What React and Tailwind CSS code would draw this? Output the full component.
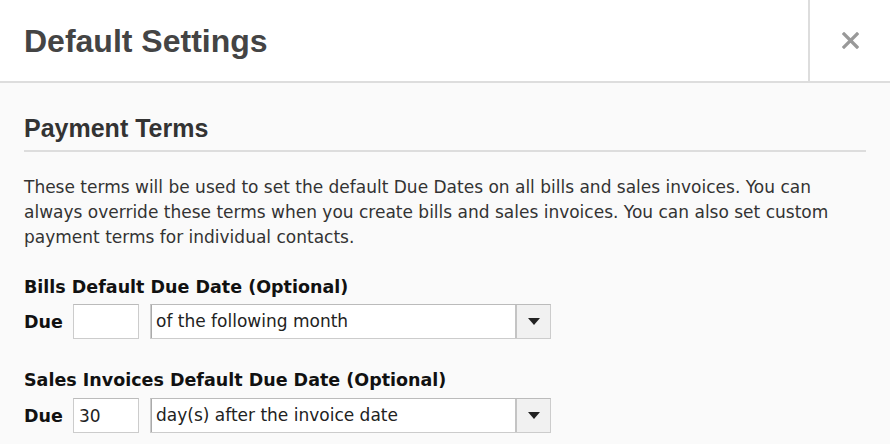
const body = { fontFamily: '"DejaVu Sans", Verdana, sans-serif' };
const head = { fontFamily: '"Liberation Sans", Arial, sans-serif' };

function DueRow({ value, option, top }) {
  return (
    <div className={`flex items-center ${top}`}>
      <span className="w-[49px] text-[17.5px] font-bold leading-[24px] text-[#111]">Due</span>
      <input
        defaultValue={value}
        className="h-[35px] w-[66px] border border-[#ccc] border-t-[#bbb] bg-white px-[5px] text-[17px] text-[#222] outline-none"
        style={body}
      />
      <div className="ml-[11px] flex h-[35px] w-[401px] border border-[#ccc] border-t-[#bbb] bg-white">
        <div className="flex flex-1 items-center border-l border-[#aaa] px-[4px] text-[17px] text-[#222]">
          {option}
        </div>
        <div className="flex w-[35px] items-center justify-center border-l-2 border-[#c4c4c4] bg-[#f1f1f1]">
          <svg width="12" height="7" viewBox="0 0 12 7">
            <polygon points="0,0 12,0 6,7" fill="#222" />
          </svg>
        </div>
      </div>
    </div>
  );
}

export default function App() {
  return (
    <div className="h-[444px] w-[890px] overflow-hidden bg-[#fafafa]" style={body}>
      {/* Header */}
      <div className="flex h-[83px] border-b-2 border-[#ddd] bg-white">
        <div className="flex flex-1 items-center px-[24px]">
          <h1 className="text-[32px] font-bold leading-[36px] text-[#444]" style={head}>
            Default Settings
          </h1>
        </div>
        <div className="flex w-[82px] items-center justify-center border-l-2 border-[#ddd]">
          <svg width="17" height="17" viewBox="0 0 17 17">
            <path d="M2 2 L15 15 M15 2 L2 15" stroke="#999" strokeWidth="3.2" strokeLinecap="square" />
          </svg>
        </div>
      </div>

      {/* Body */}
      <div className="px-[24px] pt-[31px]">
        <h2 className="border-b-2 border-[#ddd] pb-[8px] text-[25px] font-bold leading-[28px] text-[#333]" style={head}>
          Payment Terms
        </h2>

        <p className="mt-[23px] pr-[10px] text-[17px] leading-[25px] text-[#333]">
          These terms will be used to set the default Due Dates on all bills and sales invoices. You can
          always override these terms when you create bills and sales invoices. You can also set custom
          payment terms for individual contacts.
        </p>

        <div className="mt-[25px] text-[17.5px] font-bold leading-[24px] text-[#111]">
          Bills Default Due Date (Optional)
        </div>
        <DueRow value="" option="of the following month" top="mt-[5px]" />

        <div className="mt-[29px] text-[17.5px] font-bold leading-[24px] text-[#111]">
          Sales Invoices Default Due Date (Optional)
        </div>
        <DueRow value="30" option="day(s) after the invoice date" top="mt-[6px]" />
      </div>
    </div>
  );
}
